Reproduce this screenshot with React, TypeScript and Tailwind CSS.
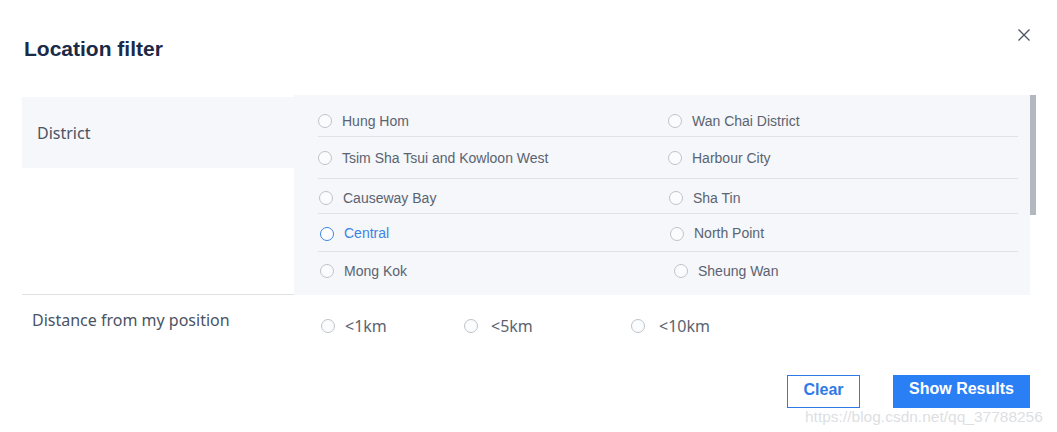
import React from 'react';

interface Opt {
  label: string;
  active?: boolean;
  shift?: string;
}

const rows: { cls: string; left: Opt; right: Opt }[] = [
  { cls: 'h-[42px] pt-[11px]', left: { label: 'Hung Hom' }, right: { label: 'Wan Chai District', shift: 'ml-0' } },
  { cls: 'h-[42px] pt-px', left: { label: 'Tsim Sha Tsui and Kowloon West' }, right: { label: 'Harbour City', shift: 'ml-0' } },
  { cls: 'h-[35px] pt-[4px]', left: { label: 'Causeway Bay', shift: 'ml-px' }, right: { label: 'Sha Tin', shift: 'ml-px' } },
  { cls: 'h-[38px] pt-[2px]', left: { label: 'Central', active: true, shift: 'ml-[2px]' }, right: { label: 'North Point', shift: 'ml-[2px]' } },
  { cls: 'h-[38px] border-b-0', left: { label: 'Mong Kok', shift: 'ml-[2px]' }, right: { label: 'Sheung Wan', shift: 'ml-[6px]' } },
];

const Radio: React.FC<{ active?: boolean }> = ({ active }) =>
  active ? (
    <span className="w-[14px] h-[14px] rounded-full border-[1.5px] border-[#3b84e3] bg-white shrink-0" />
  ) : (
    <span className="w-[14px] h-[14px] rounded-full border border-[#bfc3ca] bg-[#fbfcfd] shrink-0" />
  );

const Option: React.FC<{ opt: Opt }> = ({ opt }) => (
  <div className={`flex items-center gap-[10px] ${opt.shift ?? ''}`}>
    <Radio active={opt.active} />
    <span className={`text-[14px] ${opt.active ? 'text-[#3b84e3]' : 'text-[#5b6371]'}`}>{opt.label}</span>
  </div>
);

const App: React.FC = () => {
  return (
    <div className="relative w-[1057px] h-[432px] bg-white font-['Liberation_Sans',Arial,sans-serif] overflow-hidden">
      <div className="flex items-start justify-between pl-6 pr-[26px] pt-[35px]">
        <h1 className="text-[21px] font-bold text-[#1b2a47] leading-[28px]">Location filter</h1>
        <svg width="14" height="14" viewBox="0 0 14 14" className="mt-[-7px]">
          <path d="M1.5 1.5 L12.5 12.5 M12.5 1.5 L1.5 12.5" stroke="#4b5361" strokeWidth="1.3" />
        </svg>
      </div>

      {/* district */}
      <div className="flex mt-[32px]">
        <div className="ml-[22px] w-[272px] h-[200px] border-b border-[#dfe1e5] flex flex-col">
          <div className="mt-[2px] h-[71px] bg-[#f5f7fa] flex items-center pl-[15px]">
            <span className="font-['Noto_Sans',sans-serif] text-[16px] text-[#4a5363]">District</span>
          </div>
        </div>
        <div className="w-[736px] h-[200px] bg-[#f5f7fa] pl-6 pr-3">
          {rows.map((r, i) => (
            <div key={i} className={`grid grid-cols-[350px_1fr] items-center border-b border-[#dfe2e7] ${r.cls}`}>
              <Option opt={r.left} />
              <Option opt={r.right} />
            </div>
          ))}
        </div>
        <div className="w-[6px] h-[200px] bg-white">
          <div className="h-[120px] bg-[#b3b8c0]" />
        </div>
      </div>

      {/* distance */}
      <div className="flex items-start">
        <div className="ml-8 w-[262px] pt-[14px] font-['Noto_Sans',sans-serif] text-[16px] text-[#4a5363] leading-[22px]">
          Distance from my position
        </div>
        <div className="flex items-center pt-[20px] font-['Noto_Sans',sans-serif] text-[16px] text-[#5b6371] leading-[22px]">
          <div className="flex items-center gap-[10px] ml-[27px] w-[143px]">
            <Radio />
            <span>&lt;1km</span>
          </div>
          <div className="flex items-center gap-[13px] w-[167px]">
            <Radio />
            <span>&lt;5km</span>
          </div>
          <div className="flex items-center gap-[14px]">
            <Radio />
            <span>&lt;10km</span>
          </div>
        </div>
      </div>

      <div className="flex justify-end gap-[33px] pr-[27px] mt-[38px]">
        <button className="w-[73px] h-[33px] border border-[#2f7ae6] bg-white text-[#2f7ae6] text-[16px] font-bold pb-[4px]">
          Clear
        </button>
        <button className="w-[137px] h-[33px] bg-[#2b7ff5] text-white text-[16px] font-bold pb-[6px]">
          Show Results
        </button>
      </div>

      <span className="absolute left-[805px] top-[405px] text-[15.5px] text-[#d4d6da]/80">
        https://blog.csdn.net/qq_37788256
      </span>
    </div>
  );
};

export default App;
